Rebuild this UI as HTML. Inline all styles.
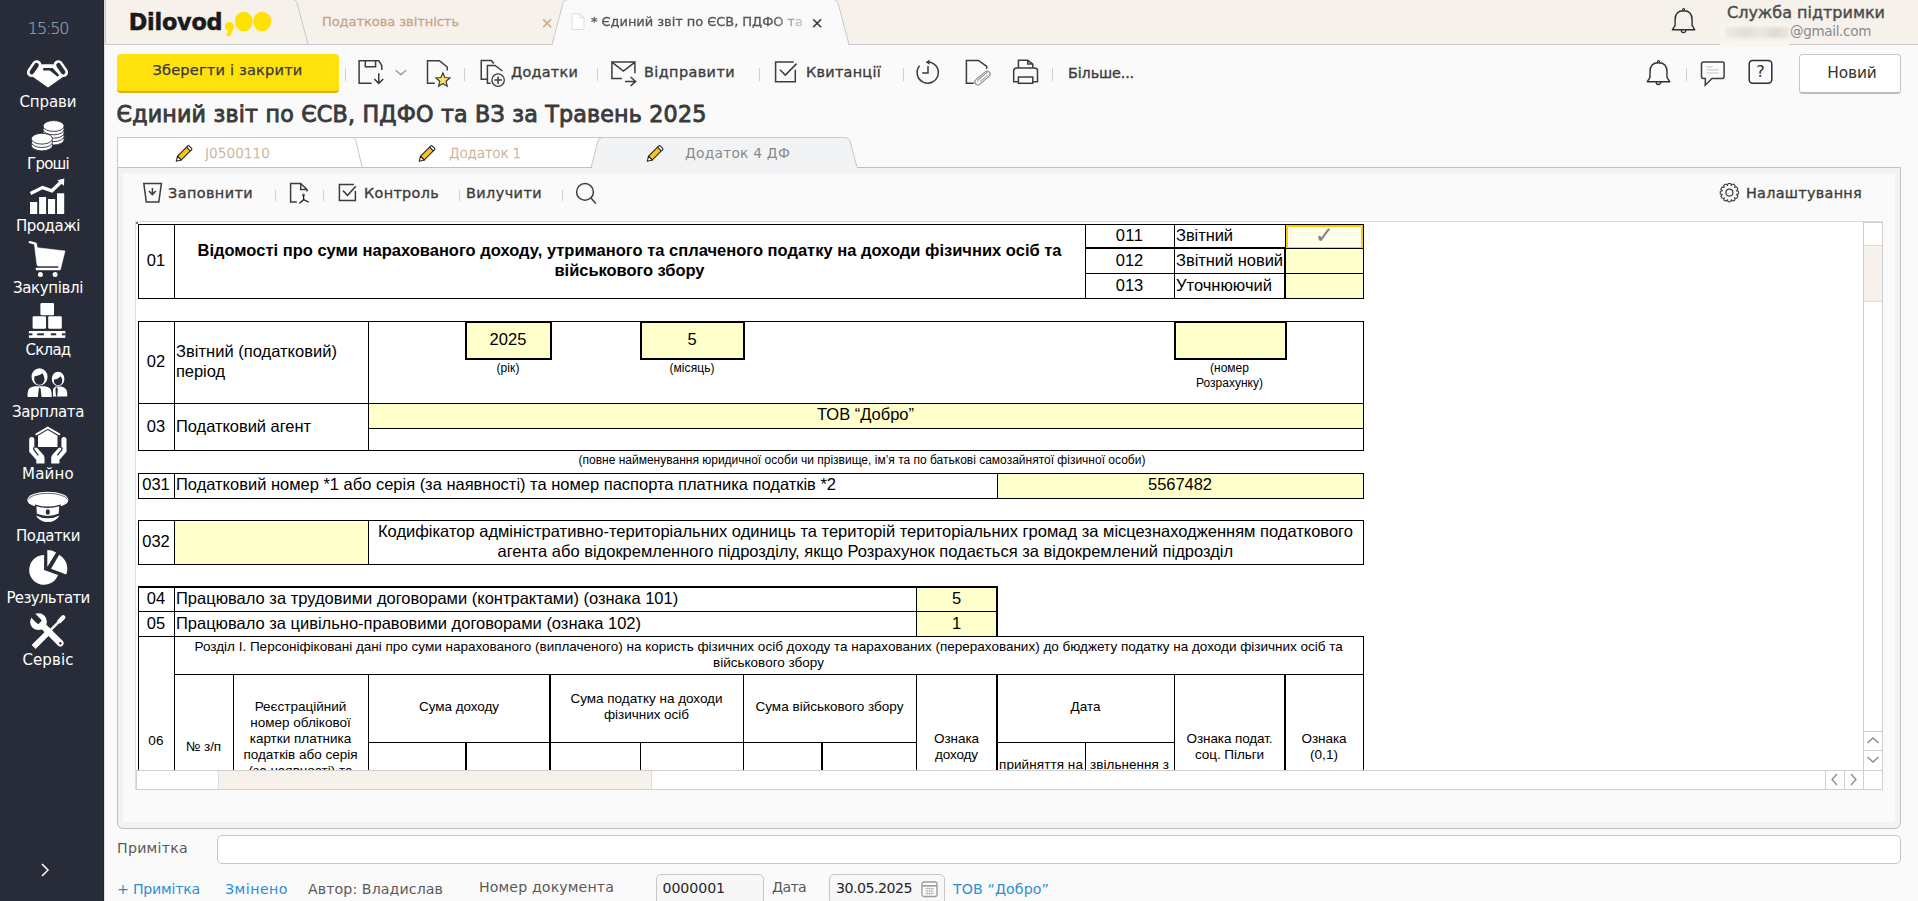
<!DOCTYPE html>
<html lang="uk"><head><meta charset="utf-8"><title>Dilovod</title>
<style>
html,body{margin:0;padding:0}
body{width:1918px;height:901px;position:relative;overflow:hidden;background:#fafafa;font-family:"DejaVu Sans","Liberation Sans",sans-serif}
div,svg{position:absolute;box-sizing:border-box}
.t{white-space:pre}
.clip{overflow:hidden}
svg{overflow:visible}
</style></head><body>
<!-- chrome -->
<div style="left:105px;top:0px;width:1813px;height:44px;background:#f6f1eb;border-left:1px solid #cbcbcb"></div>
<div style="left:105px;top:44px;width:1813px;height:1px;background:#c9c9c9;"></div>
<div style="left:0px;top:0px;width:104px;height:901px;background:#272c38;"></div>
<div style="left:103px;top:0px;width:1px;height:901px;background:#1f232d;"></div>
<div style="left:104px;top:0px;width:1px;height:901px;background:#dcdcdc;"></div>
<div class="t" style='left:27.85px;top:18.50px;font:200 16px/20px "DejaVu Sans","Liberation Sans",sans-serif;color:#93a4b9;letter-spacing:-1.122px;-webkit-text-stroke:.2px #93a4b9;'>15:50</div>
<div class="t" style='left:19.50px;top:93.00px;font:400 15px/19px "DejaVu Sans","Liberation Sans",sans-serif;color:#fff;letter-spacing:-0.099px;'>Справи</div>
<div class="t" style='left:27.00px;top:155.00px;font:400 15px/19px "DejaVu Sans","Liberation Sans",sans-serif;color:#fff;letter-spacing:-0.750px;'>Гроші</div>
<div class="t" style='left:16.00px;top:217.00px;font:400 15px/19px "DejaVu Sans","Liberation Sans",sans-serif;color:#fff;letter-spacing:-0.462px;'>Продажі</div>
<div class="t" style='left:13.00px;top:279.00px;font:400 15px/19px "DejaVu Sans","Liberation Sans",sans-serif;color:#fff;letter-spacing:-0.370px;'>Закупівлі</div>
<div class="t" style='left:25.50px;top:341.00px;font:400 15px/19px "DejaVu Sans","Liberation Sans",sans-serif;color:#fff;letter-spacing:-0.738px;'>Склад</div>
<div class="t" style='left:12.00px;top:403.00px;font:400 15px/19px "DejaVu Sans","Liberation Sans",sans-serif;color:#fff;letter-spacing:-0.357px;'>Зарплата</div>
<div class="t" style='left:22.00px;top:465.00px;font:400 15px/19px "DejaVu Sans","Liberation Sans",sans-serif;color:#fff;letter-spacing:0.225px;'>Майно</div>
<div class="t" style='left:16.00px;top:527.00px;font:400 15px/19px "DejaVu Sans","Liberation Sans",sans-serif;color:#fff;letter-spacing:-0.511px;'>Податки</div>
<div class="t" style='left:6.50px;top:589.00px;font:400 15px/19px "DejaVu Sans","Liberation Sans",sans-serif;color:#fff;letter-spacing:-0.698px;'>Результати</div>
<div class="t" style='left:22.50px;top:651.00px;font:400 15px/19px "DejaVu Sans","Liberation Sans",sans-serif;color:#fff;letter-spacing:0.086px;'>Сервіс</div>
<svg style="left:0;top:0" width="1918" height="46" viewBox="0 0 1918 46"><path d="M105 -0.500 H293 Q296 -0.500 297 3 L308 44" fill="none" stroke="#c9c9c9" stroke-width="1"/><path d="M552 44.5 L563 3 Q564 -0.5 568 -0.5 H833 Q837 -0.5 838 3 L849 44.5 Z" fill="#fafafa" stroke="none"/><path d="M552 44.5 L563 3 Q564 -0.5 568 -0.5 H833 Q837 -0.5 838 3 L849 44.5" fill="none" stroke="#c9c9c9" stroke-width="1"/><rect x="553" y="44" width="295" height="1.5" fill="#fafafa"/></svg>
<div class="t" style='left:128.80px;top:7.90px;font:700 22.4px/28px "DejaVu Sans","Liberation Sans",sans-serif;color:#1a1a1a;letter-spacing:-0.261px;-webkit-text-stroke:.5px #1a1a1a;'>Dilovod</div>
<svg style="left:222px;top:10px;" width="50" height="28" viewBox="0 0 50 28"><ellipse cx="21.750" cy="11.500" rx="8.900" ry="9.800" fill="#ffe200"/><ellipse cx="40.200" cy="11.500" rx="9" ry="9.800" fill="#ffe200"/><circle cx="7.400" cy="16.400" r="4.500" fill="#ffe200"/><path d="M11.800 17.600 L8.600 25.800 H3.900 L6.600 19 Z" fill="#ffe200"/></svg>
<div class="t" style='left:322.00px;top:14.00px;font:400 13px/16px "DejaVu Sans","Liberation Sans",sans-serif;color:#c4a68a;letter-spacing:-0.057px;-webkit-text-stroke:.3px #c4a68a;'>Податкова звітність</div>
<div class="t" style='left:541.16px;top:10.50px;font:400 20px/25px "Liberation Sans",Arial,sans-serif;color:#c6a98c;'>×</div>
<div class="t" style='left:591.00px;top:14.00px;font:400 13px/16px "DejaVu Sans","Liberation Sans",sans-serif;color:#555;letter-spacing:-0.053px;-webkit-text-stroke:.3px #555;-webkit-mask-image:linear-gradient(90deg,#000 85%,rgba(0,0,0,.25));'>* Єдиний звіт по ЄСВ, ПДФО та</div>
<div class="t" style='left:811.16px;top:10.50px;font:400 20px/25px "Liberation Sans",Arial,sans-serif;color:#333;'>×</div>
<svg style="left:571px;top:13px;" width="14" height="17" viewBox="0 0 14 17"><path d="M1 .5 h8 l4 4 v12 h-12z" fill="#fff" stroke="#ddd"/><path d="M9 .5 v4 h4" fill="none" stroke="#ddd"/></svg>
<div class="t" style='left:1727.00px;top:3.00px;font:400 16px/20px "DejaVu Sans","Liberation Sans",sans-serif;color:#4a4a4a;-webkit-text-stroke:.4px #4a4a4a;'>Служба підтримки</div>
<div class="t" style='left:1790.00px;top:23.30px;font:400 13.5px/17px "DejaVu Sans","Liberation Sans",sans-serif;color:#8a8a8a;letter-spacing:-0.312px;'>@gmail.com</div>
<div style="left:1720px;top:23px;width:69px;height:24px;background:#f8f4ef;"></div>
<div style="left:1726px;top:27px;width:63px;height:11px;background:linear-gradient(90deg,#efeae4,#e3ddd5 30%,#ebe6df 55%,#e0dad2 80%,#ece7e1);filter:blur(1.5px)"></div>
<div style="left:117px;top:54px;width:221.5px;height:39px;background:#ffe20d;border-radius:4px;border-bottom:2.5px solid #dfa912"></div>
<div class="t" style='left:152.50px;top:61.40px;font:400 14.6px/18px "DejaVu Sans","Liberation Sans",sans-serif;color:#3a3a3a;letter-spacing:0.176px;-webkit-text-stroke:.25px #3a3a3a;'>Зберегти і закрити</div>
<div style="left:345px;top:68px;width:1px;height:13px;background:#d0d0d0;"></div>
<div style="left:464px;top:68px;width:1px;height:13px;background:#d0d0d0;"></div>
<div style="left:597px;top:68px;width:1px;height:13px;background:#d0d0d0;"></div>
<div style="left:759px;top:68px;width:1px;height:13px;background:#d0d0d0;"></div>
<div style="left:903px;top:68px;width:1px;height:13px;background:#d0d0d0;"></div>
<div style="left:1052px;top:68px;width:1px;height:13px;background:#d0d0d0;"></div>
<div style="left:1686px;top:68px;width:1px;height:13px;background:#d0d0d0;"></div>
<div class="t" style='left:511.00px;top:63.00px;font:400 14.4px/18px "DejaVu Sans","Liberation Sans",sans-serif;color:#3c3c3c;letter-spacing:0.250px;-webkit-text-stroke:.35px #3c3c3c;'>Додатки</div>
<div class="t" style='left:644.00px;top:63.00px;font:400 14.4px/18px "DejaVu Sans","Liberation Sans",sans-serif;color:#3c3c3c;letter-spacing:0.423px;-webkit-text-stroke:.35px #3c3c3c;'>Відправити</div>
<div class="t" style='left:806.00px;top:63.00px;font:400 14.4px/18px "DejaVu Sans","Liberation Sans",sans-serif;color:#3c3c3c;letter-spacing:0.283px;-webkit-text-stroke:.35px #3c3c3c;'>Квитанції</div>
<div class="t" style='left:1068.00px;top:64.00px;font:400 14.4px/18px "DejaVu Sans","Liberation Sans",sans-serif;color:#3c3c3c;letter-spacing:-0.144px;-webkit-text-stroke:.35px #3c3c3c;'>Більше...</div>
<div style="left:1799px;top:54px;width:102px;height:40px;background:#fff;border:1px solid #c6c6c6;border-radius:4px;border-bottom:2px solid #bdbdbd"></div>
<div class="t" style='left:1827.25px;top:63.70px;font:400 15.4px/19px "DejaVu Sans","Liberation Sans",sans-serif;color:#333;letter-spacing:-0.116px;'>Новий</div>
<div class="t" style='left:116.50px;top:100.40px;font:400 22.2px/28px "DejaVu Sans","Liberation Sans",sans-serif;color:#3a3a3a;letter-spacing:0.189px;-webkit-text-stroke:.9px #3a3a3a;'>Єдиний звіт по ЄСВ, ПДФО та ВЗ за Травень 2025</div>
<div style="left:117px;top:137px;width:480px;height:31px;background:#fff;"></div>
<svg style="left:0;top:0" width="1918" height="170" viewBox="0 0 1918 170"><path d="M117.5 167 V137.5 H352 Q355 137.5 356 141 L362 167" fill="none" stroke="#c9c9c9"/><path d="M352 137.500 H604" fill="none" stroke="#c9c9c9"/><path d="M591 167.5 L598 141 Q599 137.5 603 137.500 H845 Q849 137.500 850 141 L857 167.5 Z" fill="#f2f3f5"/><path d="M591 167.5 L598 141 Q599 137.500 603 137.500 H845 Q849 137.500 850 141 L857 167.500" fill="none" stroke="#c9c9c9"/></svg>
<div class="t" style='left:205.00px;top:144.80px;font:200 13.7px/17px "DejaVu Sans","Liberation Sans",sans-serif;color:#c8b098;-webkit-text-stroke:.4px #c8b098;'>J0500110</div>
<div class="t" style='left:449.00px;top:144.80px;font:200 13.7px/17px "DejaVu Sans","Liberation Sans",sans-serif;color:#c8b098;letter-spacing:-0.193px;-webkit-text-stroke:.4px #c8b098;'>Додаток 1</div>
<div class="t" style='left:685.00px;top:145.00px;font:400 13.8px/17px "DejaVu Sans","Liberation Sans",sans-serif;color:#8a8a8a;letter-spacing:0.230px;'>Додаток 4 ДФ</div>
<svg style="left:174px;top:146.3px;" width="18" height="18" viewBox="0 0 18 18"><g transform="translate(0.5 1) scale(.89)"><g transform="rotate(45 9 9)"><rect x="6" y="-1" width="6" height="15" fill="#f5c518" stroke="#222" stroke-width="1.200"/><path d="M6 14 L9 19 L12 14z" fill="#fff" stroke="#222" stroke-width="1.200" stroke-linejoin="round"/><rect x="6" y="-3.500" width="6" height="3" rx="1" fill="#fff" stroke="#222" stroke-width="1.200"/></g></g></svg>
<svg style="left:417px;top:146.3px;" width="18" height="18" viewBox="0 0 18 18"><g transform="translate(0.5 1) scale(.89)"><g transform="rotate(45 9 9)"><rect x="6" y="-1" width="6" height="15" fill="#f5c518" stroke="#222" stroke-width="1.200"/><path d="M6 14 L9 19 L12 14z" fill="#fff" stroke="#222" stroke-width="1.200" stroke-linejoin="round"/><rect x="6" y="-3.500" width="6" height="3" rx="1" fill="#fff" stroke="#222" stroke-width="1.200"/></g></g></svg>
<svg style="left:645px;top:146.3px;" width="18" height="18" viewBox="0 0 18 18"><g transform="translate(0.5 1) scale(.89)"><g transform="rotate(45 9 9)"><rect x="6" y="-1" width="6" height="15" fill="#f5c518" stroke="#222" stroke-width="1.200"/><path d="M6 14 L9 19 L12 14z" fill="#fff" stroke="#222" stroke-width="1.200" stroke-linejoin="round"/><rect x="6" y="-3.500" width="6" height="3" rx="1" fill="#fff" stroke="#222" stroke-width="1.200"/></g></g></svg>
<div style="left:117px;top:167px;width:1784px;height:662px;background:#f1f2f4;border:1px solid #c0c0c0;border-radius:0 0 6px 6px"></div>
<div style="left:123px;top:173px;width:1772px;height:649px;background:#fafafa;"></div>
<div style="left:591.5px;top:167px;width:265.0px;height:1px;background:#f2f3f5;"></div>
<div class="t" style='left:168.00px;top:184.00px;font:400 14.4px/18px "DejaVu Sans","Liberation Sans",sans-serif;color:#3c3c3c;letter-spacing:0.417px;-webkit-text-stroke:.35px #3c3c3c;'>Заповнити</div>
<div class="t" style='left:364.00px;top:184.00px;font:400 14.4px/18px "DejaVu Sans","Liberation Sans",sans-serif;color:#3c3c3c;letter-spacing:0.320px;-webkit-text-stroke:.35px #3c3c3c;'>Контроль</div>
<div class="t" style='left:466.00px;top:184.00px;font:400 14.4px/18px "DejaVu Sans","Liberation Sans",sans-serif;color:#3c3c3c;letter-spacing:0.434px;-webkit-text-stroke:.35px #3c3c3c;'>Вилучити</div>
<div class="t" style='left:1746.00px;top:184.00px;font:400 14.4px/18px "DejaVu Sans","Liberation Sans",sans-serif;color:#3c3c3c;letter-spacing:0.292px;-webkit-text-stroke:.35px #3c3c3c;'>Налаштування</div>
<div style="left:275px;top:190px;width:1px;height:11px;background:#d0d0d0;"></div>
<div style="left:323px;top:190px;width:1px;height:11px;background:#d0d0d0;"></div>
<div style="left:459px;top:190px;width:1px;height:11px;background:#d0d0d0;"></div>
<div style="left:562px;top:190px;width:1px;height:11px;background:#d0d0d0;"></div>
<div style="left:135px;top:221px;width:1748px;height:569px;background:#fff;border:1px solid #dcdcdc"></div>
<!-- table -->
<div class="clip" style="left:0;top:0;width:1863px;height:770px">
<div style="left:1285px;top:224px;width:78px;height:74px;background:#ffffcc;"></div>
<div style="left:1286px;top:225px;width:77px;height:24px;background:#fffee8;border:2px solid #ffc80a"></div>
<div style="left:465px;top:321px;width:86px;height:39px;background:#ffffcc;"></div>
<div style="left:640px;top:321px;width:104px;height:39px;background:#ffffcc;"></div>
<div style="left:1174px;top:321px;width:112px;height:39px;background:#ffffcc;"></div>
<div style="left:368px;top:403px;width:995px;height:25px;background:#ffffcc;"></div>
<div style="left:997px;top:473px;width:366px;height:25px;background:#ffffcc;"></div>
<div style="left:174px;top:520px;width:194px;height:44px;background:#ffffcc;"></div>
<div style="left:916px;top:587px;width:81px;height:49px;background:#ffffcc;"></div>
<div style="left:136px;top:222px;width:2px;height:2px;background:#747474;"></div>
<div style="left:138px;top:224px;width:1226px;height:1px;background:#000;"></div>
<div style="left:138px;top:298px;width:1226px;height:1px;background:#000;"></div>
<div style="left:138px;top:224px;width:1px;height:75px;background:#000;"></div>
<div style="left:174px;top:224px;width:1px;height:75px;background:#000;"></div>
<div style="left:1085px;top:224px;width:1px;height:75px;background:#000;"></div>
<div style="left:1174px;top:224px;width:1px;height:75px;background:#000;"></div>
<div style="left:1285px;top:224px;width:1px;height:75px;background:#000;"></div>
<div style="left:1363px;top:224px;width:1px;height:75px;background:#000;"></div>
<div style="left:1085px;top:248px;width:279px;height:1px;background:#000;"></div>
<div style="left:1085px;top:273px;width:279px;height:1px;background:#000;"></div>
<div style="left:1284px;top:248px;width:2px;height:51px;background:#000;"></div>
<div style="left:1085px;top:247px;width:200px;height:2px;background:#000;"></div>
<div style="left:138px;top:321px;width:1226px;height:1px;background:#000;"></div>
<div style="left:138px;top:321px;width:1px;height:130px;background:#000;"></div>
<div style="left:174px;top:321px;width:1px;height:130px;background:#000;"></div>
<div style="left:368px;top:321px;width:1px;height:130px;background:#000;"></div>
<div style="left:1363px;top:321px;width:1px;height:130px;background:#000;"></div>
<div style="left:138px;top:403px;width:1226px;height:1px;background:#000;"></div>
<div style="left:368px;top:428px;width:996px;height:1px;background:#000;"></div>
<div style="left:138px;top:450px;width:1226px;height:1px;background:#000;"></div>
<div style="left:465px;top:321px;width:2px;height:39px;background:#000;"></div>
<div style="left:550px;top:321px;width:2px;height:39px;background:#000;"></div>
<div style="left:465px;top:358px;width:87px;height:2px;background:#000;"></div>
<div style="left:465px;top:321px;width:87px;height:2px;background:#000;"></div>
<div style="left:640px;top:321px;width:2px;height:39px;background:#000;"></div>
<div style="left:743px;top:321px;width:2px;height:39px;background:#000;"></div>
<div style="left:640px;top:358px;width:105px;height:2px;background:#000;"></div>
<div style="left:640px;top:321px;width:105px;height:2px;background:#000;"></div>
<div style="left:1174px;top:321px;width:2px;height:39px;background:#000;"></div>
<div style="left:1285px;top:321px;width:2px;height:39px;background:#000;"></div>
<div style="left:1174px;top:358px;width:113px;height:2px;background:#000;"></div>
<div style="left:1174px;top:321px;width:113px;height:2px;background:#000;"></div>
<div style="left:138px;top:473px;width:1226px;height:1px;background:#000;"></div>
<div style="left:138px;top:498px;width:1226px;height:1px;background:#000;"></div>
<div style="left:138px;top:473px;width:1px;height:26px;background:#000;"></div>
<div style="left:174px;top:473px;width:1px;height:26px;background:#000;"></div>
<div style="left:997px;top:473px;width:1px;height:26px;background:#000;"></div>
<div style="left:1363px;top:473px;width:1px;height:26px;background:#000;"></div>
<div style="left:138px;top:520px;width:1226px;height:1px;background:#000;"></div>
<div style="left:138px;top:564px;width:1226px;height:1px;background:#000;"></div>
<div style="left:138px;top:520px;width:1px;height:45px;background:#000;"></div>
<div style="left:174px;top:520px;width:1px;height:45px;background:#000;"></div>
<div style="left:368px;top:520px;width:1px;height:45px;background:#000;"></div>
<div style="left:1363px;top:520px;width:1px;height:45px;background:#000;"></div>
<div style="left:138px;top:586px;width:860px;height:2px;background:#000;"></div>
<div style="left:138px;top:611px;width:860px;height:1px;background:#000;"></div>
<div style="left:138px;top:636px;width:1226px;height:1px;background:#000;"></div>
<div style="left:138px;top:587px;width:1px;height:213px;background:#000;"></div>
<div style="left:174px;top:587px;width:1px;height:213px;background:#000;"></div>
<div style="left:916px;top:587px;width:1px;height:50px;background:#000;"></div>
<div style="left:996px;top:587px;width:2px;height:50px;background:#000;"></div>
<div style="left:1363px;top:636px;width:1px;height:164px;background:#000;"></div>
<div style="left:174px;top:674px;width:1190px;height:1px;background:#000;"></div>
<div style="left:233px;top:674px;width:1px;height:126px;background:#000;"></div>
<div style="left:368px;top:674px;width:1px;height:126px;background:#000;"></div>
<div style="left:743px;top:674px;width:1px;height:126px;background:#000;"></div>
<div style="left:916px;top:674px;width:1px;height:126px;background:#000;"></div>
<div style="left:1174px;top:674px;width:1px;height:126px;background:#000;"></div>
<div style="left:549px;top:674px;width:2px;height:126px;background:#000;"></div>
<div style="left:996px;top:674px;width:2px;height:126px;background:#000;"></div>
<div style="left:1284px;top:674px;width:2px;height:126px;background:#000;"></div>
<div style="left:368px;top:742px;width:548px;height:1px;background:#000;"></div>
<div style="left:997px;top:742px;width:177px;height:1px;background:#000;"></div>
<div style="left:465px;top:742px;width:2px;height:58px;background:#000;"></div>
<div style="left:821px;top:742px;width:2px;height:58px;background:#000;"></div>
<div style="left:640px;top:742px;width:1px;height:58px;background:#000;"></div>
<div style="left:1085px;top:742px;width:1px;height:58px;background:#000;"></div>
<div class="t" style='left:146.75px;top:250.00px;font:400 16.5px/21px "Liberation Sans",Arial,sans-serif;color:#000;letter-spacing:0.070px;'>01</div>
<div class="t" style='left:197.50px;top:240.00px;font:700 16.5px/21px "Liberation Sans",Arial,sans-serif;color:#000;letter-spacing:0.006px;'>Відомості про суми нарахованого доходу, утриманого та сплаченого податку на доходи фізичних осіб та</div>
<div class="t" style='left:554.50px;top:260.00px;font:700 16.5px/21px "Liberation Sans",Arial,sans-serif;color:#000;letter-spacing:-0.043px;'>військового збору</div>
<div class="t" style='left:1115.75px;top:225.10px;font:400 16.5px/21px "Liberation Sans",Arial,sans-serif;color:#000;letter-spacing:0.396px;'>011</div>
<div class="t" style='left:1176.00px;top:225.10px;font:400 16.5px/21px "Liberation Sans",Arial,sans-serif;color:#000;letter-spacing:-0.074px;'>Звітний</div>
<div class="t" style='left:1115.75px;top:250.10px;font:400 16.5px/21px "Liberation Sans",Arial,sans-serif;color:#000;letter-spacing:-0.010px;'>012</div>
<div class="t" style='left:1176.00px;top:250.10px;font:400 16.5px/21px "Liberation Sans",Arial,sans-serif;color:#000;letter-spacing:-0.044px;'>Звітний новий</div>
<div class="t" style='left:1115.75px;top:275.10px;font:400 16.5px/21px "Liberation Sans",Arial,sans-serif;color:#000;letter-spacing:-0.010px;'>013</div>
<div class="t" style='left:1176.00px;top:275.10px;font:400 16.5px/21px "Liberation Sans",Arial,sans-serif;color:#000;letter-spacing:0.020px;'>Уточнюючий</div>
<div class="t" style='left:1314.66px;top:221.30px;font:400 23px/29px "DejaVu Sans",sans-serif;color:#808080;'>✓</div>
<div class="t" style='left:146.75px;top:351.00px;font:400 16.5px/21px "Liberation Sans",Arial,sans-serif;color:#000;letter-spacing:0.070px;'>02</div>
<div class="t" style='left:176.00px;top:341.00px;font:400 16.5px/21px "Liberation Sans",Arial,sans-serif;color:#000;letter-spacing:0.020px;'>Звітний (податковий)</div>
<div class="t" style='left:176.00px;top:361.00px;font:400 16.5px/21px "Liberation Sans",Arial,sans-serif;color:#000;letter-spacing:-0.068px;'>період</div>
<div class="t" style='left:489.50px;top:329.00px;font:400 16.5px/21px "Liberation Sans",Arial,sans-serif;color:#000;letter-spacing:0.070px;'>2025</div>
<div class="t" style='left:687.41px;top:329.00px;font:400 16.5px/21px "Liberation Sans",Arial,sans-serif;color:#000;'>5</div>
<div class="t" style='left:496.50px;top:361.00px;font:400 12px/15px "Liberation Sans",Arial,sans-serif;color:#000;letter-spacing:0.081px;'>(рік)</div>
<div class="t" style='left:669.50px;top:361.00px;font:400 12px/15px "Liberation Sans",Arial,sans-serif;color:#000;letter-spacing:0.059px;'>(місяць)</div>
<div class="t" style='left:1210.00px;top:361.00px;font:400 12px/15px "Liberation Sans",Arial,sans-serif;color:#000;letter-spacing:0.016px;'>(номер</div>
<div class="t" style='left:1196.00px;top:375.50px;font:400 12px/15px "Liberation Sans",Arial,sans-serif;color:#000;letter-spacing:0.011px;'>Розрахунку)</div>
<div class="t" style='left:146.75px;top:416.00px;font:400 16.5px/21px "Liberation Sans",Arial,sans-serif;color:#000;letter-spacing:0.070px;'>03</div>
<div class="t" style='left:176.00px;top:416.00px;font:400 16.5px/21px "Liberation Sans",Arial,sans-serif;color:#000;letter-spacing:-0.045px;'>Податковий агент</div>
<div class="t" style='left:817.00px;top:404.00px;font:400 16.5px/21px "Liberation Sans",Arial,sans-serif;color:#000;letter-spacing:-0.009px;'>ТОВ “Добро”</div>
<div class="t" style='left:578.50px;top:453.00px;font:400 12px/15px "Liberation Sans",Arial,sans-serif;color:#000;'>(повне найменування юридичної особи чи прізвище, ім’я та по батькові самозайнятої фізичної особи)</div>
<div class="t" style='left:142.25px;top:474.10px;font:400 16.5px/21px "Liberation Sans",Arial,sans-serif;color:#000;letter-spacing:-0.010px;'>031</div>
<div class="t" style='left:176.00px;top:474.10px;font:400 16.5px/21px "Liberation Sans",Arial,sans-serif;color:#000;letter-spacing:-0.011px;'>Податковий номер *1 або серія (за наявності) та номер паспорта платника податків *2</div>
<div class="t" style='left:1148.00px;top:474.10px;font:400 16.5px/21px "Liberation Sans",Arial,sans-serif;color:#000;letter-spacing:-0.036px;'>5567482</div>
<div class="t" style='left:142.25px;top:531.00px;font:400 16.5px/21px "Liberation Sans",Arial,sans-serif;color:#000;letter-spacing:-0.010px;'>032</div>
<div class="t" style='left:378.00px;top:521.00px;font:400 16.5px/21px "Liberation Sans",Arial,sans-serif;color:#000;'>Кодифікатор адміністративно-територіальних одиниць та територій територіальних громад за місцезнаходженням податкового</div>
<div class="t" style='left:497.50px;top:541.00px;font:400 16.5px/21px "Liberation Sans",Arial,sans-serif;color:#000;'>агента або відокремленного підрозділу, якщо Розрахунок подається за відокремлений підрозділ</div>
<div class="t" style='left:146.75px;top:587.60px;font:400 16.5px/21px "Liberation Sans",Arial,sans-serif;color:#000;letter-spacing:0.070px;'>04</div>
<div class="t" style='left:146.75px;top:612.60px;font:400 16.5px/21px "Liberation Sans",Arial,sans-serif;color:#000;letter-spacing:0.070px;'>05</div>
<div class="t" style='left:176.00px;top:587.60px;font:400 16.5px/21px "Liberation Sans",Arial,sans-serif;color:#000;'>Працювало за трудовими договорами (контрактами) (ознака 101)</div>
<div class="t" style='left:176.00px;top:612.60px;font:400 16.5px/21px "Liberation Sans",Arial,sans-serif;color:#000;letter-spacing:-0.011px;'>Працювало за цивільно-правовими договорами (ознака 102)</div>
<div class="t" style='left:951.91px;top:587.60px;font:400 16.5px/21px "Liberation Sans",Arial,sans-serif;color:#000;'>5</div>
<div class="t" style='left:951.91px;top:612.60px;font:400 16.5px/21px "Liberation Sans",Arial,sans-serif;color:#000;'>1</div>
<div class="t" style='left:194.50px;top:638.10px;font:400 13.5px/17px "Liberation Sans",Arial,sans-serif;color:#000;'>Розділ I. Персоніфіковані дані про суми нарахованого (виплаченого) на користь фізичних осіб доходу та нарахованих (перерахованих) до бюджету податку на доходи фізичних осіб та</div>
<div class="t" style='left:713.00px;top:654.10px;font:400 13.5px/17px "Liberation Sans",Arial,sans-serif;color:#000;letter-spacing:0.007px;'>військового збору</div>
<div class="t" style='left:148.25px;top:731.60px;font:400 13.5px/17px "Liberation Sans",Arial,sans-serif;color:#000;letter-spacing:0.234px;'>06</div>
<div class="t" style='left:186.00px;top:738.10px;font:400 13.5px/17px "Liberation Sans",Arial,sans-serif;color:#000;letter-spacing:-0.097px;'>№ з/п</div>
<div class="t" style='left:254.71px;top:698.10px;font:400 13.5px/17px "Liberation Sans",Arial,sans-serif;color:#000;'>Реєстраційний</div>
<div class="t" style='left:250.31px;top:714.10px;font:400 13.5px/17px "Liberation Sans",Arial,sans-serif;color:#000;'>номер облікової</div>
<div class="t" style='left:249.70px;top:730.10px;font:400 13.5px/17px "Liberation Sans",Arial,sans-serif;color:#000;'>картки платника</div>
<div class="t" style='left:243.40px;top:746.10px;font:400 13.5px/17px "Liberation Sans",Arial,sans-serif;color:#000;'>податків або серія</div>
<div class="t" style='left:248.46px;top:762.10px;font:400 13.5px/17px "Liberation Sans",Arial,sans-serif;color:#000;'>(за наявності) та</div>
<div class="t" style='left:419.00px;top:698.10px;font:400 13.5px/17px "Liberation Sans",Arial,sans-serif;color:#000;letter-spacing:-0.051px;'>Сума доходу</div>
<div class="t" style='left:570.50px;top:690.10px;font:400 13.5px/17px "Liberation Sans",Arial,sans-serif;color:#000;letter-spacing:-0.019px;'>Сума податку на доходи</div>
<div class="t" style='left:604.00px;top:706.10px;font:400 13.5px/17px "Liberation Sans",Arial,sans-serif;color:#000;letter-spacing:-0.028px;'>фізичних осіб</div>
<div class="t" style='left:755.50px;top:698.10px;font:400 13.5px/17px "Liberation Sans",Arial,sans-serif;color:#000;letter-spacing:0.011px;'>Сума військового збору</div>
<div class="t" style='left:934.00px;top:730.10px;font:400 13.5px/17px "Liberation Sans",Arial,sans-serif;color:#000;letter-spacing:-0.062px;'>Ознака</div>
<div class="t" style='left:935.00px;top:746.10px;font:400 13.5px/17px "Liberation Sans",Arial,sans-serif;color:#000;letter-spacing:-0.112px;'>доходу</div>
<div class="t" style='left:1070.50px;top:698.10px;font:400 13.5px/17px "Liberation Sans",Arial,sans-serif;color:#000;letter-spacing:0.023px;'>Дата</div>
<div class="t" style='left:999.00px;top:756.10px;font:400 13.5px/17px "Liberation Sans",Arial,sans-serif;color:#000;letter-spacing:0.078px;'>прийняття на</div>
<div class="t" style='left:1090.00px;top:756.10px;font:400 13.5px/17px "Liberation Sans",Arial,sans-serif;color:#000;letter-spacing:0.049px;'>звільнення з</div>
<div class="t" style='left:1186.50px;top:730.10px;font:400 13.5px/17px "Liberation Sans",Arial,sans-serif;color:#000;letter-spacing:-0.090px;'>Ознака подат.</div>
<div class="t" style='left:1195.00px;top:746.10px;font:400 13.5px/17px "Liberation Sans",Arial,sans-serif;color:#000;letter-spacing:-0.067px;'>соц. Пільги</div>
<div class="t" style='left:1301.50px;top:730.10px;font:400 13.5px/17px "Liberation Sans",Arial,sans-serif;color:#000;letter-spacing:-0.062px;'>Ознака</div>
<div class="t" style='left:1310.00px;top:746.10px;font:400 13.5px/17px "Liberation Sans",Arial,sans-serif;color:#000;letter-spacing:0.047px;'>(0,1)</div>
</div>
<!-- over -->
<div style="left:136px;top:770px;width:1747px;height:20px;background:#fff;border:1px solid #cfcfcf"></div>
<div style="left:218px;top:771px;width:434px;height:18px;background:#f6f1eb;border-right:1px solid #ddd;border-left:1px solid #ddd"></div>
<div style="left:1825px;top:770px;width:1px;height:20px;background:#cfcfcf;"></div>
<div style="left:1844px;top:770px;width:1px;height:20px;background:#cfcfcf;"></div>
<div style="left:1863px;top:770px;width:1px;height:20px;background:#cfcfcf;"></div>
<div style="left:1863px;top:222px;width:20px;height:549px;background:#fff;border:1px solid #cfcfcf"></div>
<div style="left:1864px;top:245px;width:18px;height:57px;background:#f6f1eb;border-top:1px solid #ddd;border-bottom:1px solid #ddd"></div>
<div style="left:1863px;top:731px;width:20px;height:1px;background:#cfcfcf;"></div>
<div style="left:1863px;top:750px;width:20px;height:1px;background:#cfcfcf;"></div>
<svg style="left:1863px;top:731px;" width="20" height="19" viewBox="0 0 20 19"><path d="M4.5 12 L10 7 L15.5 12" fill="none" stroke="#8a8a8a" stroke-width="1.3"/></svg>
<svg style="left:1863px;top:750px;" width="20" height="19" viewBox="0 0 20 19"><path d="M4.5 7 L10 12 L15.5 7" fill="none" stroke="#8a8a8a" stroke-width="1.3"/></svg>
<svg style="left:1825px;top:770px;" width="19" height="19" viewBox="0 0 19 19"><path d="M12 4 L7 9.500 L12 15" fill="none" stroke="#8a8a8a" stroke-width="1.3"/></svg>
<svg style="left:1844px;top:770px;" width="19" height="19" viewBox="0 0 19 19"><path d="M7 4 L12 9.500 L7 15" fill="none" stroke="#8a8a8a" stroke-width="1.3"/></svg>
<div class="t" style='left:117.00px;top:838.80px;font:400 14.2px/18px "DejaVu Sans","Liberation Sans",sans-serif;color:#5a5a5a;letter-spacing:0.240px;'>Примітка</div>
<div style="left:217px;top:835px;width:1684px;height:29px;background:#fff;border:1px solid #c6c6c6;border-radius:5px"></div>
<div class="t" style='left:117.00px;top:879.90px;font:400 14.2px/18px "DejaVu Sans","Liberation Sans",sans-serif;color:#2b8fd6;letter-spacing:-0.247px;'>+ Примітка</div>
<div class="t" style='left:225.00px;top:879.90px;font:400 14.2px/18px "DejaVu Sans","Liberation Sans",sans-serif;color:#2b8fd6;letter-spacing:0.471px;'>Змінено</div>
<div class="t" style='left:308.00px;top:879.90px;font:400 14.2px/18px "DejaVu Sans","Liberation Sans",sans-serif;color:#5a5a5a;letter-spacing:0.077px;'>Автор: Владислав</div>
<div class="t" style='left:479.00px;top:877.70px;font:400 14.2px/18px "DejaVu Sans","Liberation Sans",sans-serif;color:#5a5a5a;letter-spacing:0.105px;'>Номер документа</div>
<div style="left:656px;top:874px;width:108px;height:31px;background:#f7f7f7;border:1px solid #c6c6c6;border-radius:5px"></div>
<div class="t" style='left:662.50px;top:879.40px;font:400 14.2px/18px "DejaVu Sans","Liberation Sans",sans-serif;color:#262626;letter-spacing:-0.098px;'>0000001</div>
<div class="t" style='left:772.00px;top:877.90px;font:400 14.2px/18px "DejaVu Sans","Liberation Sans",sans-serif;color:#5a5a5a;letter-spacing:-0.688px;'>Дата</div>
<div style="left:829px;top:874px;width:116px;height:31px;background:#f7f7f7;border:1px solid #c6c6c6;border-radius:5px"></div>
<div class="t" style='left:836.00px;top:879.40px;font:400 14.2px/18px "DejaVu Sans","Liberation Sans",sans-serif;color:#262626;letter-spacing:-0.523px;'>30.05.2025</div>
<div class="t" style='left:953.00px;top:879.90px;font:400 14.2px/18px "DejaVu Sans","Liberation Sans",sans-serif;color:#2b8fd6;letter-spacing:0.092px;'>ТОВ “Добро”</div>
<svg style="left:920.5px;top:881px;" width="17" height="16" viewBox="0 0 17 16"><rect x="1" y="1" width="15" height="14.500" rx="2" fill="#fff" stroke="#9a9a9a" stroke-width="1.300"/><path d="M1 4.800 h15" stroke="#9a9a9a" stroke-width="1.600"/><path d="M4 7.500 h9 M4 10 h9 M4 12.500 h9 M6.200 6.500 v7.500 M8.500 6.500 v7.500 M10.800 6.500 v7.500" stroke="#c4c4c4" stroke-width="1"/></svg>
<svg style="left:38px;top:862px;" width="12" height="16" viewBox="0 0 12 16"><path d="M4 2 L10 8 L4 14" fill="none" stroke="#fff" stroke-width="1.500"/></svg>
<!-- icons -->
<svg style="left:0;top:0" width="1918" height="901" viewBox="0 0 1918 901"><g transform="translate(22 54)">
<path d="M11.5 22.500 L26 32.600 L40.500 22.500 L36.500 12 L30.500 11 H21 L15 12 Z" fill="#fff" stroke="#fff" stroke-width="1.400" stroke-linejoin="round"/>
<path d="M21.200 14 H30.600 L37.200 21 L35.600 22.800 L27.800 16.600 H21.200 Z" fill="#272c38"/>
<path d="M14.700 10.900 L9.600 18.400" stroke="#fff" stroke-width="9.400" stroke-linecap="round"/>
<path d="M14.500 11.200 L9.900 18" stroke="#272c38" stroke-width="4.600" stroke-linecap="round"/>
<path d="M36.300 10.900 L41.400 18.400" stroke="#fff" stroke-width="9.400" stroke-linecap="round"/>
<path d="M36.500 11.200 L41.100 18" stroke="#272c38" stroke-width="4.600" stroke-linecap="round"/>
</g><g transform="translate(22 116)"><ellipse cx="31.600" cy="23.6" rx="10.600" ry="5.400" fill="#fff" stroke="#272c38" stroke-width=".9"/><ellipse cx="31.600" cy="20.2" rx="10.600" ry="5.400" fill="#fff" stroke="#272c38" stroke-width=".9"/><ellipse cx="31.600" cy="16.8" rx="10.600" ry="5.400" fill="#fff" stroke="#272c38" stroke-width=".9"/><ellipse cx="31.600" cy="13.4" rx="10.600" ry="5.400" fill="#fff" stroke="#272c38" stroke-width=".9"/><ellipse cx="31.600" cy="10.0" rx="10.600" ry="5.400" fill="#fff" stroke="#272c38" stroke-width=".9"/><ellipse cx="19.900" cy="29.5" rx="10.600" ry="5.400" fill="#fff" stroke="#272c38" stroke-width=".9"/><ellipse cx="19.900" cy="26.1" rx="10.600" ry="5.400" fill="#fff" stroke="#272c38" stroke-width=".9"/><ellipse cx="19.900" cy="22.7" rx="10.600" ry="5.400" fill="#fff" stroke="#272c38" stroke-width=".9"/></g><g transform="translate(22 176)">
<rect x="8" y="26" width="7.200" height="12" fill="#fff"/><rect x="17.100" y="21" width="7" height="17" fill="#fff"/>
<rect x="26" y="23" width="7.100" height="15" fill="#fff"/><rect x="35" y="17.300" width="7.200" height="20.700" fill="#fff"/>
<path d="M8.500 17.400 L20.600 11.600 L29.900 14.800 L38.500 6.500" fill="none" stroke="#fff" stroke-width="3.300" stroke-linejoin="miter"/>
<path d="M42.300 2.500 L35.300 4.300 L41.900 9.700 Z" fill="#fff"/>
</g><g transform="translate(22 238)">
<path d="M7.800 4.200 L13.300 5.700" stroke="#fff" stroke-width="2.400" stroke-linecap="round"/>
<path d="M12.200 4.800 L14.400 5.400 L15.400 9.700 L43 13 L38.300 31.900 H14 V30.100 H36.300 L36.900 28 H16.200 L15 27 Z" fill="#fff" stroke="#fff" stroke-width=".6" stroke-linejoin="round"/>
<circle cx="18.400" cy="36.400" r="2.500" fill="#fff"/><circle cx="33.100" cy="36.400" r="2.500" fill="#fff"/>
</g><g transform="translate(22 300)">
<rect x="18.400" y="3" width="13.600" height="12.200" rx="1.200" fill="#fff"/>
<rect x="10.600" y="16.200" width="13.400" height="12.600" rx="1.200" fill="#fff"/>
<rect x="26.200" y="16.200" width="13.600" height="12.600" rx="1.200" fill="#fff"/>
<rect x="6.900" y="31" width="36.400" height="6.900" fill="#fff"/>
<rect x="6.900" y="33.300" width="3.500" height="2" fill="#272c38"/><rect x="15.200" y="33.300" width="6.700" height="2" fill="#272c38"/>
<rect x="28.800" y="33.300" width="5.400" height="2" fill="#272c38"/><rect x="40" y="33.300" width="3.300" height="2" fill="#272c38"/>
</g><g transform="translate(22 362)">
<path d="M31 34.400 V27 L33.500 24.500 H39.500 Q45.200 26 45.200 31 V34.400 Z" fill="#fff"/>
<ellipse cx="36.100" cy="16.900" rx="6.300" ry="7.200" fill="#fff"/>
<path d="M32 17.600 Q36 17 38.800 14.200 Q40.400 17 40.300 19 A4.200 4.300 0 0 1 31.900 19 Z" fill="#272c38"/>
<path d="M34.600 25 L35.800 27 L35.200 34.400 H34 L33.400 27 Z" fill="#272c38"/>
<path d="M5 35.700 V31 Q5 24.500 13 23.600 H22.500 Q30.300 24.500 30.300 31 V35.700 Z" fill="#fff" stroke="#272c38" stroke-width="1.200"/>
<ellipse cx="17.500" cy="14.900" rx="8" ry="8.700" fill="#fff"/>
<path d="M12.300 14.400 Q17.500 14 20.400 11.200 Q22.700 14.500 22.600 17.300 A5.200 5.500 0 0 1 12.200 17.300 Z" fill="#272c38"/>
<path d="M17.700 25.300 L18.700 27 L19.600 35.700 H15.800 L16.700 27 Z" fill="#272c38"/>
</g><g transform="translate(22 424)">
<path d="M14.300 10.300 L25.800 3.600 L37.400 10.300" fill="none" stroke="#fff" stroke-width="2" stroke-linecap="round" stroke-linejoin="miter"/>
<path d="M16 11.700 L25.800 5.900 L35.500 11.700 V23 H16 Z" fill="#fff"/>
<path d="M7.200 15.600 a2.550 2.550 0 0 1 5.100 0 V23.400 L13 24 Q14 22.800 15.200 24 L21.500 31 Q22.500 32.500 22.500 34 V39.500 H14.300 V36 L7.200 27.700 Z" fill="#fff"/>
<path d="M12.300 23.200 Q11 24.500 12 25.800 L16.300 31.400" fill="none" stroke="#272c38" stroke-width="1.300"/><g transform="translate(51.700 0) scale(-1 1)"><path d="M7.200 15.600 a2.550 2.550 0 0 1 5.100 0 V23.400 L13 24 Q14 22.800 15.200 24 L21.500 31 Q22.500 32.500 22.500 34 V39.500 H14.300 V36 L7.200 27.700 Z" fill="#fff"/>
<path d="M12.300 23.200 Q11 24.500 12 25.800 L16.300 31.400" fill="none" stroke="#272c38" stroke-width="1.300"/></g>
</g><g transform="translate(22 486)">
<ellipse cx="25.800" cy="13.900" rx="20.500" ry="8.200" fill="#fff"/>
<path d="M6 13.600 A20 7.300 0 0 1 45.600 13.600" fill="none" stroke="#272c38" stroke-width=".7"/>
<path d="M13.600 19.300 Q25.800 23.300 38 19.300 L37.300 28.200 Q25.800 33 14.200 28.200 Z" fill="#fff" stroke="#272c38" stroke-width="1.400"/>
<path d="M13.900 29.400 Q25.800 35.200 37.500 29.400 Q34 36 25.800 36 Q17.500 36 13.900 29.400 Z" fill="#fff"/>
<ellipse cx="25.800" cy="26" rx="2" ry="2.800" fill="#272c38"/>
</g><g transform="translate(22 548)">
<path d="M22.100 21.900 L22.100 7 A14.900 14.900 0 1 0 36.060 27.120 Z" fill="#fff"/>
<path d="M25.300 19 L25.300 2 A17 17 0 0 1 34.100 4.400 Z" fill="#fff"/>
<path d="M29 20.800 L37.200 6.700 A16.300 16.300 0 0 1 44.200 26.600 Z" fill="#fff"/>
</g><g transform="translate(22 610)">
<path d="M13.600 35 L27 21.600" stroke="#fff" stroke-width="5.600" stroke-linecap="square"/>
<path d="M27 21.600 L38 10.600" stroke="#fff" stroke-width="2.400"/>
<path d="M37.400 11.200 L41.200 7.400" stroke="#fff" stroke-width="4.400" stroke-linecap="round"/>
<circle cx="16.500" cy="11.700" r="8.400" fill="#fff"/>
<path d="M16.600 11 L8 2.500" stroke="#272c38" stroke-width="5.600" stroke-linecap="round"/>
<path d="M20 15 L38.300 33.200" stroke="#fff" stroke-width="6.600" stroke-linecap="round"/>
<circle cx="38.300" cy="33.300" r="1.200" fill="#272c38"/>
</g>
<path d="M371.600 83.250 H359.100 V60.750 H378.750 L381.750 65.400 V70.100 M365.300 60.750 V66.700 H375.600 V60.750 M378.750 73.250 V83 M374.300 79 L378.750 83.400 L383.300 79" fill="none" stroke="#3c3c3c" stroke-width="1.500"/>
<path d="M395.500 70.100 L400.900 74.600 L406.250 70.100" fill="none" stroke="#8a8a8a" stroke-width="1.200"/>
<path d="M434.700 83.250 H427.500 V60.750 H439.400 L447.200 67 V70.400" fill="none" stroke="#3c3c3c" stroke-width="1.500"/>
<path d="M442.90 72.80 L444.84 77.53 L449.94 77.91 L446.04 81.22 L447.25 86.19 L442.90 83.50 L438.55 86.19 L439.76 81.22 L435.86 77.91 L440.96 77.53 Z" fill="#ffe066" stroke="#3c3c3c" stroke-width="1.200" stroke-linejoin="miter"/>
<path d="M486.900 79.200 H481.250 V60.400 H491.250 L494 63.600 M490.600 83.250 H487.400 V65.400 H495 L502.500 71" fill="none" stroke="#3c3c3c" stroke-width="1.500" stroke-width="1.400"/>
<circle cx="498.100" cy="80.100" r="6.250" fill="#fafafa" stroke="#3c3c3c" stroke-width="1.300"/>
<path d="M494.400 80.100 H501.900 M498.100 76.400 V83.900" fill="none" stroke="#3c3c3c" stroke-width="1.500" stroke-width="1.300"/>
<path d="M621.900 78.600 H611.900 V62 H634.900 V73.250 M612.500 62.600 L623.400 71 L634.400 62.600 M625 81.400 H635.400 M630.600 77 L635.600 81.400 L630.600 86" fill="none" stroke="#3c3c3c" stroke-width="1.500"/>
<path d="M793.750 62 H775.600 V81.700 H795.300 V69.800" fill="none" stroke="#3c3c3c" stroke-width="1.500"/>
<path d="M780 69.800 L785.300 75.100 L796.600 63.600" fill="none" stroke="#3c3c3c" stroke-width="1.500" stroke-width="1.800"/>
<path d="M919.58 65.69 A10.6 10.6 0 1 0 927.15 61.91" fill="none" stroke="#3c3c3c" stroke-width="1.500" stroke-width="1.200"/><path d="M929.500 59.600 L925.700 62.200 L929.500 64.800 Z" fill="#3c3c3c"/><path d="M928 66 V73 H922.200" fill="none" stroke="#3c3c3c" stroke-width="1.500" stroke-width="1.300"/><path d="M973.800 83.300 H966.400 V60.400 H978.500 L986.700 66.500 V68.800" fill="none" stroke="#3c3c3c" stroke-width="1.500"/><g transform="translate(982.500 78) rotate(-40)"><rect x="-9" y="-3" width="18" height="6" rx="3" fill="#fafafa" stroke="#8a8a8a" stroke-width="1.100"/><path d="M-5.500 0 a1.300 1.300 0 0 1 1.300 -1.300 H7.500" fill="none" stroke="#8a8a8a" stroke-width="1"/><path d="M-4 1.200 H5.500" fill="none" stroke="#8a8a8a" stroke-width=".9"/></g><path d="M1018.400 68 V60.200 H1027.700 L1032.800 64.100 V68 M1027.700 60.200 V64.100 H1032.800" fill="none" stroke="#3c3c3c" stroke-width="1.500"/>
<path d="M1018.400 81.700 H1013.700 V71 Q1013.700 68 1016.700 68 H1034.500 Q1037.500 68 1037.500 71 V81.700 H1032.800" fill="none" stroke="#3c3c3c" stroke-width="1.500" stroke-width="1.600"/>
<rect x="1018.400" y="77" width="14.400" height="6.300" fill="none" stroke="#3c3c3c" stroke-width="1.500" stroke-width="1.600"/><g transform="translate(1658.5 60.3) scale(1.0)"><path d="M-11.200 21.400 H11.200 L8.500 17 V11.500 C8.500 5.500 5 2.400 0 2.400 C-5 2.400 -8.500 5.500 -8.500 11.500 V17 Z" fill="none" stroke="#2b2f38" stroke-width="1.400" stroke-linejoin="round"/><circle cx="0" cy="1.200" r="1" fill="none" stroke="#2b2f38" stroke-width="1.100"/><path d="M-2.300 21.600 A2.300 2.600 0 0 0 2.300 21.600" fill="none" stroke="#2b2f38" stroke-width="1.300"/></g><g transform="translate(1683.6 8.4) scale(1.0)"><path d="M-11.200 21.400 H11.200 L8.500 17 V11.500 C8.500 5.500 5 2.400 0 2.400 C-5 2.400 -8.500 5.500 -8.500 11.500 V17 Z" fill="none" stroke="#2b2f38" stroke-width="1.400" stroke-linejoin="round"/><circle cx="0" cy="1.200" r="1" fill="none" stroke="#2b2f38" stroke-width="1.100"/><path d="M-2.300 21.600 A2.300 2.600 0 0 0 2.300 21.600" fill="none" stroke="#2b2f38" stroke-width="1.300"/></g><path d="M1705.400 78.500 H1703.500 Q1701.500 78.500 1701.500 76.500 V64.100 Q1701.500 62.100 1703.500 62.100 H1722.100 Q1724.100 62.100 1724.100 64.100 V76.500 Q1724.100 78.500 1722.100 78.500 H1712 L1705.200 85.200 Z" fill="none" stroke="#3c3c3c" stroke-width="1.500"/>
<path d="M1706.500 66.800 H1712.400 M1706.500 69.900 H1718.700 M1706.500 72.900 H1718.700" fill="none" stroke="#cfcfcf" stroke-width="1.200"/>
<rect x="1749.200" y="60.600" width="22.600" height="22.600" rx="3.500" fill="none" stroke="#2b2f38" stroke-width="1.500"/><path d="M143.800 183.400 H161.400 L158.800 202 H146.300 Z" fill="none" stroke="#3c3c3c" stroke-width="1.500" stroke-width="1.300"/>
<path d="M152.400 187.900 V194.300 M148.900 191 L152.400 194.600 L155.800 191" fill="none" stroke="#3c3c3c" stroke-width="1.500" stroke-width="1.300"/>
<path d="M296.800 202 H290.600 V183.400 H300.700 L307 189.500 V191.400 M300.700 183.400 V189.500 H307" fill="none" stroke="#3c3c3c" stroke-width="1.500" stroke-width="1.300"/>
<path d="M303.500 195.200 L303.700 199.600 L299.800 203 M303.700 199.600 L308.400 202" fill="none" stroke="#222" stroke-width="1.300" stroke-linecap="round"/>
<circle cx="303.500" cy="195" r="1" fill="none" stroke="#222" stroke-width=".8"/>
<path d="M353.900 184.400 H339.400 V200.600 H355.400 V191" fill="none" stroke="#3c3c3c" stroke-width="1.500" stroke-width="1.400"/>
<path d="M342.900 190.600 L347.600 195.300 L355.800 186.300" fill="none" stroke="#3c3c3c" stroke-width="1.500" stroke-width="1.500"/>
<circle cx="585" cy="191.900" r="8.400" fill="none" stroke="#3c3c3c" stroke-width="1.500" stroke-width="1.300"/><path d="M591 198 L595.800 203.600" fill="none" stroke="#3c3c3c" stroke-width="1.500" stroke-width="1.400"/>
<path d="M1738.52 191.41 L1738.52 193.79 L1736.51 194.65 L1736.58 194.38 L1737.90 196.13 L1736.70 198.19 L1734.54 197.93 L1734.73 197.74 L1734.99 199.90 L1732.93 201.10 L1731.18 199.78 L1731.45 199.71 L1730.59 201.72 L1728.21 201.72 L1727.35 199.71 L1727.62 199.78 L1725.87 201.10 L1723.81 199.90 L1724.07 197.74 L1724.26 197.93 L1722.10 198.19 L1720.90 196.13 L1722.22 194.38 L1722.29 194.65 L1720.28 193.79 L1720.28 191.41 L1722.29 190.55 L1722.22 190.82 L1720.90 189.07 L1722.10 187.01 L1724.26 187.27 L1724.07 187.46 L1723.81 185.30 L1725.87 184.10 L1727.62 185.42 L1727.35 185.49 L1728.21 183.48 L1730.59 183.48 L1731.45 185.49 L1731.18 185.42 L1732.93 184.10 L1734.99 185.30 L1734.73 187.46 L1734.54 187.27 L1736.70 187.01 L1737.90 189.07 L1736.58 190.82 L1736.51 190.55 Z" fill="none" stroke="#3c3c3c" stroke-width="1.100" stroke-linejoin="round"/><circle cx="1729.4" cy="192.6" r="3.500" fill="none" stroke="#3c3c3c" stroke-width="1.200"/></svg>
<div class="t" style='left:1756.25px;top:62.00px;font:400 16px/20px "DejaVu Sans","Liberation Sans",sans-serif;color:#2b2f38;'>?</div>
</body></html>
